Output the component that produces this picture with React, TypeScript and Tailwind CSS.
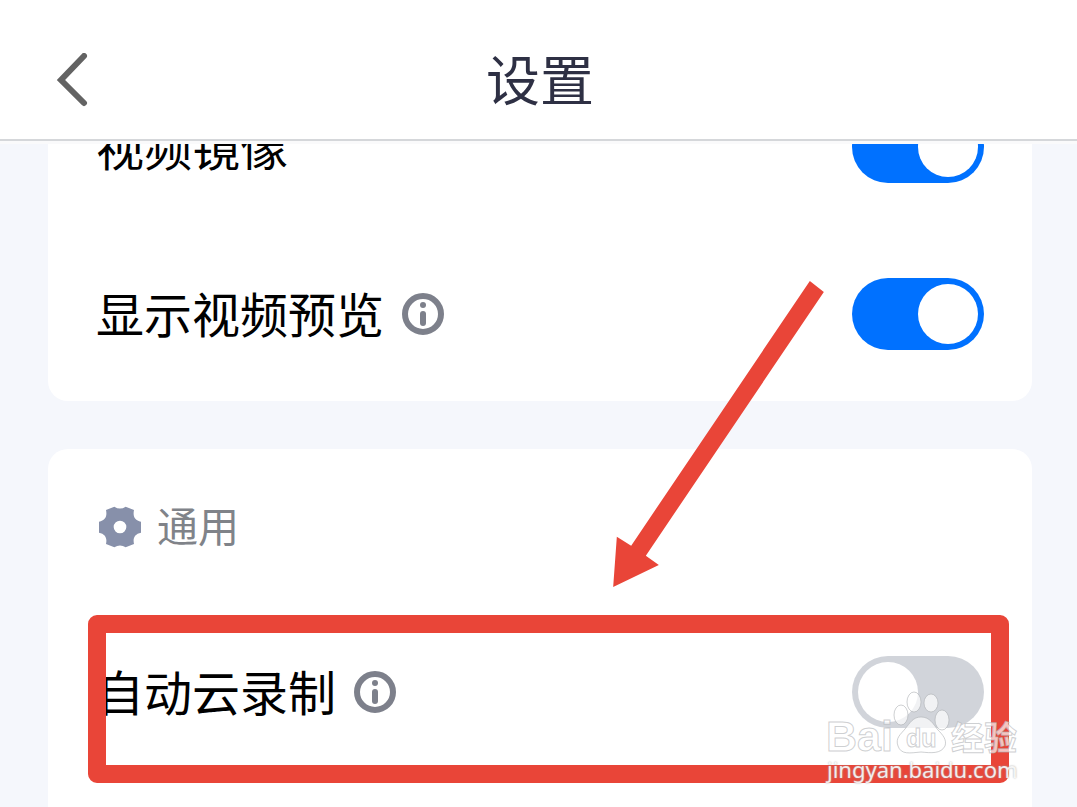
import React, { useState } from "react";

const InfoIcon = () => (
  <svg viewBox="-21 -21 42 42" className="w-[42px] h-[42px]" aria-hidden="true">
    <circle r="18" fill="none" stroke="#7d808b" strokeWidth="6" />
    <circle cy="-9" r="3" fill="#7d808b" />
    <rect x="-3" y="-3" width="6" height="15" rx="3" fill="#7d808b" />
  </svg>
);

const GearIcon = () => (
  <svg viewBox="-63 -63 126 126" className="w-[42px] h-[42px]" aria-hidden="true">
    <path
      fill="#8790aa"
      fillRule="evenodd"
      d="M-17-61Q0-50 17-61L42-51C38-32 44-20 63-16V17C44 21 38 33 42 51L17 61Q0 50-17 61L-42 51C-38 33-44 21-63 17V-16C-44-20-38-32-42-51ZM19 0A19 19 0 1 0-19 0A19 19 0 1 0 19 0Z"
    />
  </svg>
);

type RowProps = {
  id: string;
  label: string;
  info?: boolean;
  defaultOn?: boolean;
  children?: React.ReactNode;
};

const SettingRow = ({ id, label, info, defaultOn = false, children }: RowProps) => {
  const [on, setOn] = useState<boolean>(defaultOn);

  return (
    <div className="relative flex h-[167px] items-center justify-between">
      <div className="flex items-center gap-[18px]">
        <label htmlFor={id} className="pb-1 text-5xl text-black">
          {label}
        </label>
        {info && (
          <button type="button" aria-label="info">
            <InfoIcon />
          </button>
        )}
      </div>
      <input
        id={id}
        type="checkbox"
        checked={on}
        onChange={(e) => setOn(e.target.checked)}
        className="h-[72px] w-[132px] shrink-0 appearance-none rounded-full bg-[#d1d4da] p-[6px] before:block before:h-[60px] before:w-[60px] before:rounded-full before:bg-white before:content-[''] checked:bg-[#0071ff] checked:before:ml-auto"
      />
      {children}
    </div>
  );
};

// red frame and arrow pointing at the row
const Highlight = () => (
  <>
    <div className="pointer-events-none absolute -bottom-2 -left-2 -right-[25px] top-[7px] rounded-[9px] border-[18px] border-[#e94538]" />
    <svg
      viewBox="99 32 632 918"
      className="pointer-events-none absolute bottom-full right-40 mb-[21px] h-[306px] w-[211px]"
      aria-hidden="true"
    >
      <path fill="#e94538" d="M689 32L731 65L197 856L236 884L99 950L110 799L153 826Z" />
    </svg>
  </>
);

const Watermark = () => (
  <div className="pointer-events-none absolute bottom-6 right-14 w-[194px]">
    <svg viewBox="826 688 194 68" className="block h-[68px] w-[194px] overflow-visible">
      <g
        fill="#ffffff"
        fillOpacity="0.7"
        stroke="#aeb0b4"
        strokeOpacity="0.6"
        strokeWidth="1"
        fontFamily="'Liberation Sans', 'Noto Sans CJK SC', sans-serif"
        fontWeight="700"
      >
        <text x="825" y="751" fontSize="43">
          Bai
        </text>
        <ellipse cx="900" cy="715" rx="7" ry="10" />
        <ellipse cx="913" cy="702" rx="7" ry="10" />
        <ellipse cx="930" cy="703" rx="7" ry="9" />
        <ellipse cx="941" cy="720" rx="7" ry="10" />
        <path d="M920 717C929 717 932 724 937 730C942 735 946 740 944 746C940 754 930 753 920 752C909 753 900 755 897 746C894 738 900 734 904 729C909 723 912 717 920 717Z" />
        <text x="905" y="747" fontSize="25">
          du
        </text>
        <text x="950" y="750" fontSize="33">
          经验
        </text>
      </g>
    </svg>
    <p className="text-[22px] leading-[27px] whitespace-nowrap text-white/85 font-['Noto_Sans','Open_Sans',sans-serif] [text-shadow:0_0_2px_#a0a0a0]">
      jingyan.baidu.com
    </p>
  </div>
);

const App = () => {
  return (
    <div className="relative flex h-screen flex-col overflow-hidden bg-[#f5f7fc] font-['Noto_Sans_CJK_SC',sans-serif]">
      <header className="grid h-[141px] shrink-0 grid-cols-[1fr_auto_1fr] items-center border-b-2 border-[#d5d7da] bg-white pl-14 pr-[53px] pt-5">
        <button type="button" aria-label="返回" className="justify-self-start">
          <svg viewBox="56 53 32 54" className="h-[54px] w-8" aria-hidden="true">
            <path
              d="M84 56L61 80L84 103"
              fill="none"
              stroke="#636363"
              strokeWidth="6"
              strokeLinecap="round"
            />
          </svg>
        </button>
        <h1 className="pb-1 text-[54px] leading-[60px] text-[#2e3044]">设置</h1>
      </header>

      <main className="flex-1 overflow-hidden border-t-[3px] border-[#fafafb] pl-12 pr-[45px]">
        <section className="-mt-[81px] rounded-[20px] bg-white px-12 pb-1">
          <SettingRow id="mirror" label="视频镜像" defaultOn />
          <SettingRow id="preview" label="显示视频预览" info defaultOn />
        </section>

        <section className="mt-12 rounded-[20px] bg-white px-12 pt-12 pb-24">
          <div className="mb-[51px] flex h-[60px] items-center gap-4 pl-[3px]">
            <GearIcon />
            <h2 className="pb-1 text-[41px] text-[#808389]">通用</h2>
          </div>
          <SettingRow id="cloud-record" label="自动云录制" info>
            <Highlight />
          </SettingRow>
        </section>
      </main>

      <Watermark />
    </div>
  );
};

export default App;
